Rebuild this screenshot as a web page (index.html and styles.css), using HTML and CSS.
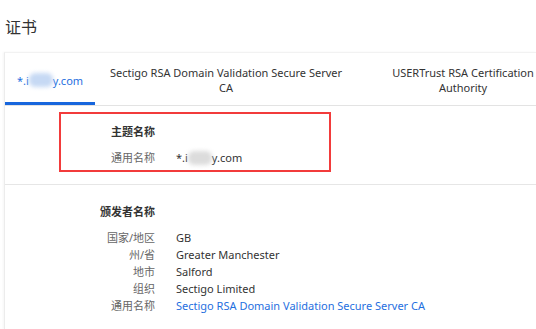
FILE: index.html
```html
<!DOCTYPE html>
<html lang="zh-CN">
<head>
<meta charset="utf-8">
<link rel="stylesheet" href="styles.css">
</head>
<body>
<h1 class="title">证书</h1>
<div class="card">
  <div class="tabs">
    <div class="tab tab-1 active">*.i<span class="blur blur-blue"></span>y.com</div>
    <div class="tab tab-2">Sectigo RSA Domain Validation Secure Server CA</div>
    <div class="tab tab-3">USERTrust RSA Certification Authority</div>
  </div>
  <div class="section subject">
    <div class="grid">
      <div class="label heading">主题名称</div><div></div>
      <div class="label row-first">通用名称</div><div class="value row-first">*.i<span class="blur blur-gray"></span>y.com</div>
    </div>
  </div>
  <div class="divider"></div>
  <div class="section issuer">
    <div class="grid">
      <div class="label heading">颁发者名称</div><div></div>
      <div class="label row-first">国家/地区</div><div class="value row-first">GB</div>
      <div class="label">州/省</div><div class="value">Greater Manchester</div>
      <div class="label">地市</div><div class="value">Salford</div>
      <div class="label">组织</div><div class="value">Sectigo Limited</div>
      <div class="label">通用名称</div><div class="value"><a class="link" href="#">Sectigo RSA Domain Validation Secure Server CA</a></div>
    </div>
  </div>
</div>
</body>
</html>
```
FILE: styles.css
```css
html, body {
  margin: 0;
  padding: 0;
  background: #ffffff;
}
body {
  font-family: "Noto Sans", "Noto Sans CJK SC", sans-serif;
  color: #333333;
  font-size: 11px;
  overflow: hidden;
  width: 536px;
  height: 329px;
}
.title {
  margin: 0;
  padding: 16px 0 0 5px;
  height: 52px;
  box-sizing: border-box;
  font-size: 16px;
  font-weight: normal;
  line-height: 22px;
  color: #333333;
}
.card {
  margin-left: 4px;
  border-left: 1px solid #ececec;
  border-top: 1px solid #f2f2f2;
  box-shadow: -1px 0 2px rgba(0,0,0,0.04);
  height: 276px;
  overflow: hidden;
}
.tabs {
  display: flex;
  height: 52px;
  border-bottom: 1px solid #e3e3e3;
}
.tab {
  position: relative;
  flex-shrink: 0;
  display: flex;
  align-items: center;
  justify-content: center;
  text-align: center;
  font-size: 11px;
  line-height: 15px;
  padding-top: 2px;
  color: #333333;
  box-sizing: border-box;
}
.tab-1 { width: 90px; }
.tab-2 { width: 262px; padding-left: 8px; padding-right: 8px; }
.tab-3 { width: 212px; padding-left: 16px; padding-right: 16px; }
.tab.active { color: #1f6fe0; }
.tab.active::after {
  content: "";
  position: absolute;
  left: 0;
  right: 0;
  bottom: 0;
  height: 3px;
  background: #1766dd;
}
.blur {
  display: inline-block;
  width: 24px;
  height: 14px;
  vertical-align: -3px;
  border-radius: 6px;
  filter: blur(2px);
}
.blur-blue { background: #c6d9f4; }
.blur-gray { background: #dcdcdc; }
.section.subject {
  margin: 6px 0 0 54px;
  width: 272px;
  height: 60px;
  box-sizing: border-box;
  border: 2px solid #f23b3b;
  padding: 9px 0 0 34px;
}
.grid {
  display: grid;
  grid-template-columns: 60px auto;
  column-gap: 21px;
  line-height: 17px;
}
.label {
  text-align: right;
  color: #666666;
  white-space: nowrap;
}
.label.heading {
  color: #333333;
  font-weight: bold;
}
.row-first {
  margin-top: 9px;
}
.value {
  color: #333333;
  white-space: nowrap;
}
.divider {
  margin-top: 12px;
  height: 1px;
  background: #e6e6e6;
}
.section.issuer {
  padding: 18px 0 0 90px;
}
.link {
  color: #1f6fe0;
  text-decoration: none;
}
```
